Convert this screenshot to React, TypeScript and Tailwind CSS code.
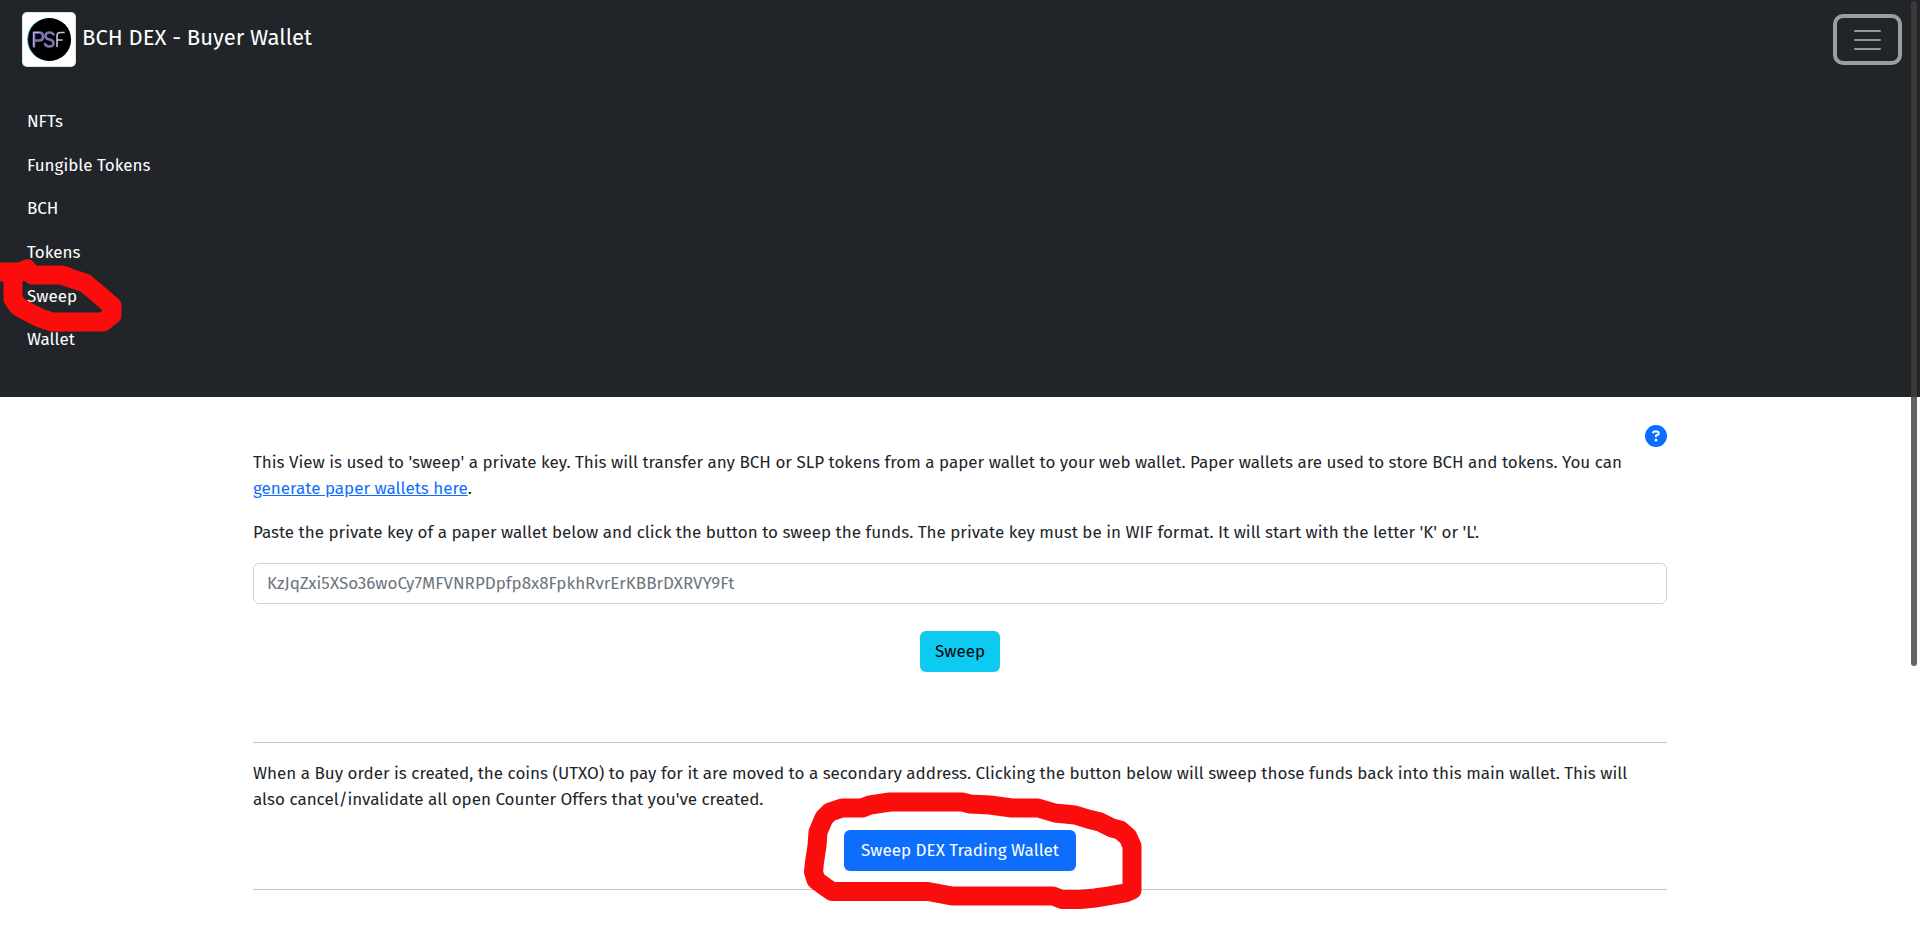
import { FaCircleQuestion } from 'react-icons/fa6';

const navItems = ['NFTs', 'Fungible Tokens', 'BCH', 'Tokens', 'Sweep', 'Wallet'];

function Logo() {
  return (
    <svg viewBox="0 0 54 55" className="h-[55px] w-[54px] shrink-0" role="img" aria-label="PSF">
      <rect width="54" height="55" rx="5" fill="#dee2e6" />
      <rect x="1" y="1" width="52" height="53" rx="4" fill="#fff" />
      <circle cx="26.7" cy="27.5" r="21.5" fill="#2aa5dc" />
      <circle cx="27.6" cy="27.5" r="21.5" fill="#000" />
      <g fill="none" strokeLinecap="round" strokeLinejoin="round">
        <g stroke="#7a74b4" strokeWidth="2.6">
          <path d="M12 34.5V20.5H17Q21 20.5 21 24.5T17 28.5H12" />
          <path d="M31.5 22.5Q30.5 20.5 27.5 20.5Q23.5 20.5 23.5 24Q23.5 27 27.5 27.5Q31.5 28.5 31.5 31Q31.5 34.5 27.5 34.5Q24 34.5 23 32" />
        </g>
        <path d="M35 34.5V24Q35 20.5 38.5 20.5H42M35 28H40" stroke="#c9c6d8" strokeWidth="1.6" />
        <path d="M11.5 34V20.5H17" stroke="#b5b0dd" strokeWidth="1" />
      </g>
    </svg>
  );
}

function SweepLinkMark() {
  return (
    <svg
      viewBox="0 255 130 85"
      aria-hidden="true"
      className="pointer-events-none absolute -left-[27px] -top-[19px] z-10 h-[85px] w-[130px]"
      fill="none"
      stroke="#fc0d0d"
      strokeWidth="19"
      strokeLinejoin="round"
      strokeLinecap="round"
    >
      <path d="M-10 271H20L27 268L32 274H62L70 277L85 282L97 292L112 305V314L103 321H52L40 317L28 311L18 305L13 298V280" />
    </svg>
  );
}

function SweepButtonMark() {
  return (
    <svg
      viewBox="800 785 346 130"
      aria-hidden="true"
      className="pointer-events-none absolute -top-[45px] left-1/2 -ml-40 h-[130px] w-[346px]"
      fill="none"
      stroke="#fc0d0d"
      strokeWidth="19"
      strokeLinejoin="round"
      strokeLinecap="round"
    >
      <path d="M842 808L862 808L870 805L890 802L930 802H962L970 804L990 805L1012 808L1038 808L1055 813L1075 815L1088 819L1100 822L1112 828L1120 830L1128 837L1132 846V890L1125 893L1108 896L1095 898L1080 899.5H1062L1053 896H952L928 891.5H832L824 886L816 880L813.5 872L814.5 862L817 846L818 832L824 818L830 812Z" />
    </svg>
  );
}

export default function App() {
  return (
    <div className="relative bg-white font-['Fira_Sans','Noto_Sans',sans-serif] text-[17px] leading-[26px] text-[#212529]">
      <header className="bg-[#212529] pb-[35px] text-white">
        <div className="flex items-start justify-between pl-[22px] pr-[18px] pt-3">
          <a href="#home" className="flex items-start gap-[6px] text-[22px] leading-[52px]">
            <Logo />
            <span>BCH DEX - Buyer Wallet</span>
          </a>
          <button
            type="button"
            aria-label="Toggle navigation"
            className="mt-[2px] flex h-[51px] w-[69px] items-center justify-center rounded-[10px] border-4 border-[#9b9d9f]"
          >
            <svg viewBox="0 0 27 22" className="h-[22px] w-[27px]" fill="none" stroke="#95979a" strokeWidth="2" strokeLinecap="round">
              <path d="M1 2H26M1 11H26M1 20H26" />
            </svg>
          </button>
        </div>
        <nav className="mt-[33px] flex h-[262px] flex-col items-start pl-[27px]">
          {navItems.map((item) => (
            <div key={item} className="relative flex flex-1 items-center">
              <a href={'#' + item.toLowerCase().replace(' ', '-')}>{item}</a>
              {item === 'Sweep' && <SweepLinkMark />}
            </div>
          ))}
        </nav>
      </header>

      <main className="mx-auto max-w-[1440px] px-[13px] pb-11 pt-7">
        <div className="flex h-[25px] justify-end">
          <button type="button" aria-label="Help" className="h-[22px] w-[22px] text-[#0d6efd]">
            <FaCircleQuestion className="h-[22px] w-[22px]" />
          </button>
        </div>
        <p className="pr-2">
          This View is used to 'sweep' a private key. This will transfer any BCH or SLP tokens from a paper wallet to your web
          wallet. Paper wallets are used to store BCH and tokens. You can{' '}
          <a href="#paper-wallets" className="text-[#0d6efd] underline">generate paper wallets here</a>.
        </p>
        <label htmlFor="private-key" className="mt-[18px] block">
          Paste the private key of a paper wallet below and click the button to sweep the funds. The private key must be in WIF
          format. It will start with the letter 'K' or 'L'.
        </label>
        <input
          id="private-key"
          type="text"
          placeholder="KzJqZxi5XSo36woCy7MFVNRPDpfp8x8FpkhRvrErKBBrDXRVY9Ft"
          className="mt-[17px] block h-[41px] w-full rounded-md border border-[#ced4da] px-[13px] placeholder:text-[#6c757d]"
        />
        <div className="mt-[27px] flex justify-center">
          <button type="button" className="h-[41px] rounded-md bg-[#0dcaf0] px-[15px] text-black">Sweep</button>
        </div>
        <hr className="mt-[70px] border-[#c7c8c9]" />
        <p className="mt-[18px] pr-2">
          When a Buy order is created, the coins (UTXO) to pay for it are moved to a secondary address. Clicking the button below
          will sweep those funds back into this main wallet. This will also cancel/invalidate all open Counter Offers that you've
          created.
        </p>
        <div className="relative mt-[17px] flex justify-center">
          <button type="button" className="h-[41px] rounded-md bg-[#0d6efd] px-[17px] text-white">Sweep DEX Trading Wallet</button>
          <SweepButtonMark />
        </div>
        <hr className="mt-[18px] border-[#c7c8c9]" />
      </main>

      <div aria-hidden="true" className="absolute right-[3px] top-px h-[665px] w-[6px] rounded-full bg-[#423c37]/80" />
    </div>
  );
}
